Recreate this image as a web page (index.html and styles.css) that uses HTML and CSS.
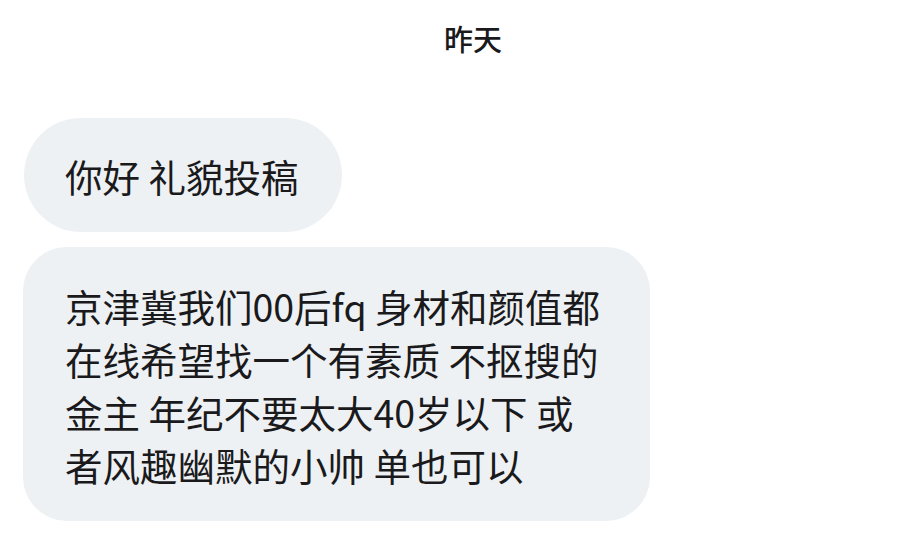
FILE: index.html
```html
<!DOCTYPE html>
<html lang="zh-CN">
<head>
  <meta charset="UTF-8">
  <title>聊天记录</title>
  <link rel="stylesheet" href="styles.css">
</head>
<body>
  <div class="chat">
    <div class="day">昨天</div>

    <div class="bubble short">你好 礼貌投稿</div>

    <div class="bubble long">
      京津冀我们00后fq 身材和颜值都<br>
      在线希望找一个有素质 不抠搜的<br>
      金主 年纪不要太大40岁以下 或<br>
      者风趣幽默的小帅 单也可以
    </div>
  </div>
</body>
</html>
```

FILE: styles.css
```css
body {
  margin: 0;
  background: #fff;
  font-family: "Noto Sans CJK SC", "Noto Sans", sans-serif;
  color: #1a1a1c;
}

.chat {
  display: flex;
  flex-direction: column;
  align-items: flex-start;
  padding: 0 0 0 23px;
}

.day {
  align-self: stretch;
  text-align: center;
  font-size: 29px;
  font-weight: 500;
  line-height: 40px;
  padding: 18px 0 0 4px;
  margin-bottom: 60px;
}

.bubble {
  background: #eef1f3;
  font-size: 37.5px;
  line-height: 53px;
  white-space: nowrap;
}

.short {
  margin-left: 1px;
  padding: 31px 44px 30px 41px;
  border-radius: 57px;
}

.long {
  margin-top: 15px;
  width: 627px;
  box-sizing: border-box;
  padding: 32px 42px 30px 42px;
  border-radius: 44px;
}
```
